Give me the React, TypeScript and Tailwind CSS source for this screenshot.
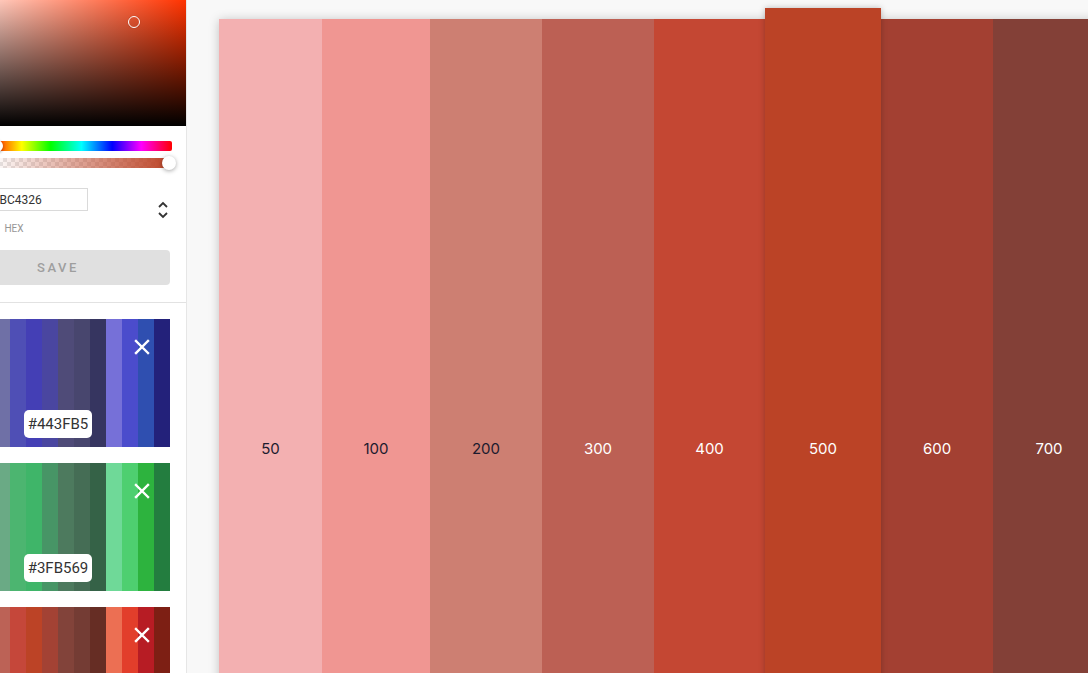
import React from "react";

const mainCols = [
  { label: "50", color: "#f3b0b1", w: "w-[103px]", dark: true },
  { label: "100", color: "#f09692", w: "w-[108px]", dark: true },
  { label: "200", color: "#cd7f72", w: "w-[112px]", dark: true },
  { label: "300", color: "#bc6054", w: "w-[112px]", dark: false },
  { label: "400", color: "#c44733", w: "w-[111px]", dark: false },
  { label: "500", color: "#bb4326", w: "w-[116px]", dark: false, raised: true },
  { label: "600", color: "#a34032", w: "w-[112px]", dark: false },
  { label: "700", color: "#834037", w: "w-[112px]", dark: false },
  { label: "800", color: "#733a31", w: "w-[112px]", dark: false },
  { label: "900", color: "#642e25", w: "w-[112px]", dark: false },
];

const cards = [
  {
    hex: "#443FB5",
    colors: ["#9d9fd0", "#8a8bc6", "#7b7cb8", "#6f70a6", "#4f4fb5", "#443fb5", "#4a46a0", "#4f4b78", "#48466e", "#363560", "#7670d8", "#4b4ccc", "#2f4fb0", "#23217a"],
  },
  {
    hex: "#3FB569",
    colors: ["#a7d6b8", "#8fcba5", "#7cbd94", "#6aaa85", "#4cb570", "#3fb569", "#479566", "#4d7a5e", "#456d55", "#356247", "#6fd998", "#4ecf70", "#2db33e", "#237d3f"],
  },
  {
    hex: "#BC4326",
    colors: ["#f3b0b1", "#f09692", "#cd7f72", "#bc6256", "#c5473a", "#bc4326", "#a34234", "#82433a", "#743c34", "#662d24", "#ec6f53", "#e23e2b", "#b71c24", "#7d1f14"],
  },
];

function XIcon() {
  return (
    <svg width="16" height="16" viewBox="0 0 16 16" fill="none">
      <path d="M2 2L14 14M14 2L2 14" stroke="white" strokeWidth="2.4" strokeLinecap="square" />
    </svg>
  );
}

function Card({ hex, colors }: { hex: string; colors: string[] }) {
  return (
    <div className="relative flex h-[128px] w-[224px] shrink-0">
      {colors.map((c, i) => (
        <div key={i} className="h-full w-[16px]" style={{ backgroundColor: c }} />
      ))}
      <div className="absolute right-[20px] top-[20px]">
        <XIcon />
      </div>
      <div className="absolute bottom-[9px] left-0 right-0 flex justify-center">
        <div className="flex h-[28px] items-center rounded-[5px] bg-white px-[4px] text-[15px] text-[#333] [font-family:Roboto,sans-serif]">
          {hex}
        </div>
      </div>
    </div>
  );
}

export default function App() {
  return (
    <div className="flex h-[673px] w-[1088px] overflow-hidden bg-[#f8f8f8] [font-family:Inter,sans-serif]">
      {/* Left panel */}
      <div className="h-full w-[187px] shrink-0 overflow-hidden border-r border-[#e6e6e6] bg-white">
        <div className="ml-[-70px] flex w-[256px] flex-col">
          {/* saturation */}
          <div className="relative h-[126px] w-full bg-[linear-gradient(to_top,#000,rgba(0,0,0,0)),linear-gradient(to_right,#fff,#ff3300)]">
            <div className="absolute left-[198px] top-[16px] h-[12px] w-[12px] rounded-full border-[1.5px] border-white shadow-[0_0_1px_rgba(0,0,0,0.4)]" />
          </div>
          {/* sliders */}
          <div className="flex pl-[61px] pr-[14px] pt-[15px]">
            <div className="flex w-[181px] flex-col gap-[7px]">
              <div className="relative h-[10px] w-full rounded-r-[2px] bg-[linear-gradient(to_right,#f00_0%,#ff0_17%,#0f0_33%,#0ff_50%,#00f_67%,#f0f_83%,#f00_100%)]">
                <div className="absolute left-[0px] top-[-1px] h-[12px] w-[12px] rounded-full bg-white shadow-[0_1px_3px_rgba(0,0,0,0.35)]" />
              </div>
              <div className="relative h-[10px] w-full rounded-r-[2px] bg-[repeating-conic-gradient(#e6e6e6_0%_25%,#ffffff_0%_50%)] bg-[length:8px_8px]">
                <div className="absolute inset-0 rounded-r-[2px] bg-[linear-gradient(to_right,rgba(188,67,38,0),rgba(188,67,38,1))]" />
                <div className="absolute right-[-4px] top-[-2px] h-[14px] w-[14px] rounded-full bg-white shadow-[0_1px_4px_rgba(0,0,0,0.35)]" />
              </div>
            </div>
          </div>
          {/* fields */}
          <div className="flex items-start pt-[20px]">
            <div className="ml-[10px] flex w-[148px] flex-col items-center">
              <div className="flex h-[23px] w-full items-center justify-center border border-[#dadada] pl-[6px] text-[12px] text-[#333] [font-family:Roboto,sans-serif]">
                #BC4326
              </div>
              <div className="mt-[13px] text-[10px] leading-none text-[#969696] [font-family:Roboto,sans-serif]">HEX</div>
            </div>
            <div className="ml-[69px] mt-[13px] flex flex-col items-center gap-[4px]">
              <svg width="12" height="7" viewBox="0 0 12 7" fill="none">
                <path d="M2 6L6 2L10 6" stroke="#333" strokeWidth="1.8" />
              </svg>
              <svg width="12" height="7" viewBox="0 0 12 7" fill="none">
                <path d="M2 1L6 5L10 1" stroke="#333" strokeWidth="1.8" />
              </svg>
            </div>
          </div>
          {/* save */}
          <div className="px-4 pt-[16px]">
            <div className="flex h-[35px] w-[224px] items-center justify-center rounded-[4px] bg-[#e0e0e0] text-[13px] font-medium tracking-[0.2em] text-[#9e9e9e] [font-family:Roboto,sans-serif]">
              SAVE
            </div>
          </div>
          <div className="mt-[17px] h-px w-full bg-[#e2e2e2]" />
          {/* cards */}
          <div className="flex flex-col gap-[16px] px-4 pt-[16px]">
            {cards.map((c) => (
              <Card key={c.hex} hex={c.hex} colors={c.colors} />
            ))}
          </div>
        </div>
      </div>

      {/* Main */}
      <div className="flex-1 pl-[32px] pt-[19px]">
        <div className="flex w-max items-start shadow-[0_1px_10px_rgba(0,0,0,0.22)]">
          {mainCols.map((c) => (
            <div
              key={c.label}
              className={
                c.raised
                  ? `${c.w} relative z-10 mt-[-11px] flex h-[869px] shrink-0 justify-center pt-[431px] shadow-[0_0_6px_rgba(0,0,0,0.25)]`
                  : `${c.w} flex h-[858px] shrink-0 justify-center pt-[420px]`
              }
              style={{ backgroundColor: c.color }}
            >
              <span className={`text-[15px] leading-[20px] ${c.dark ? "text-[#1c1b2e]" : "text-white"}`}>{c.label}</span>
            </div>
          ))}
        </div>
      </div>
    </div>
  );
}
